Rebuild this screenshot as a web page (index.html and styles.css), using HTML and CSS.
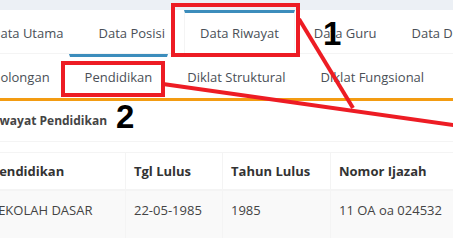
FILE: index.html
```html
<!DOCTYPE html>
<html lang="id">
<head>
<meta charset="utf-8">
<title>Riwayat Pendidikan</title>
<link rel="stylesheet" href="styles.css">
</head>
<body>
<div class="topbar"></div>
<div class="wrap">
  <ul class="nav nav-main">
    <li><a>Data Utama</a></li>
    <li><a>Data Posisi</a></li>
    <li class="active"><a>Data Riwayat</a></li>
    <li><a>Data Guru</a></li>
    <li><a>Data Dokumen</a></li>
  </ul>
  <ul class="nav nav-sub">
    <li><a>Golongan</a></li>
    <li class="active"><a>Pendidikan</a></li>
    <li><a>Diklat Struktural</a></li>
    <li><a>Diklat Fungsional</a></li>
    <li><a>Penghargaan</a></li>
  </ul>
  <div class="panel">
    <div class="panel-heading">Riwayat Pendidikan</div>
    <div class="panel-body">
      <table class="grid">
        <colgroup>
          <col class="c1"><col class="c2"><col class="c3"><col class="c4">
        </colgroup>
        <thead>
          <tr><th>Pendidikan</th><th>Tgl Lulus</th><th>Tahun Lulus</th><th>Nomor Ijazah</th></tr>
        </thead>
        <tbody>
          <tr><td>SEKOLAH DASAR</td><td>22-05-1985</td><td>1985</td><td>11 OA oa 024532</td></tr>
        </tbody>
      </table>
    </div>
  </div>
</div>
<svg class="annot" width="453" height="238" viewBox="0 0 453 238">
  <rect x="173" y="5" width="125" height="50" fill="none" stroke="#ed1c24" stroke-width="4"/>
  <rect x="63" y="63" width="100" height="32" fill="none" stroke="#ed1c24" stroke-width="4"/>
  <line x1="299" y1="19" x2="353" y2="108" stroke="#ed1c24" stroke-width="4"/>
  <line x1="163" y1="84" x2="460" y2="126" stroke="#ed1c24" stroke-width="4"/>
  <text x="323" y="45" class="num">1</text>
  <text x="116" y="128" class="num">2</text>
</svg>
</body>
</html>
```
FILE: styles.css
```css
html, body {
  margin: 0;
  padding: 0;
  background: #ffffff;
  overflow: hidden;
  width: 453px;
  height: 238px;
  position: relative;
  font-family: "Open Sans", "Noto Sans", sans-serif;
  font-size: 13px;
  color: #444;
}
.topbar {
  height: 10px;
  background: #ecf0f5;
}
.wrap {
  margin-left: -25px;
  width: 720px;
}
.nav {
  list-style: none;
  margin: 0;
  padding: 0;
  display: flex;
  flex-wrap: nowrap;
}
.nav li {
  margin-right: 3px;
  border-top: 3px solid transparent;
  border-left: 1px solid transparent;
  border-right: 1px solid transparent;
  white-space: nowrap;
}
.nav li a {
  display: block;
  padding: 0 15px;
  color: #4a4f57;
}
.nav li.active {
  border-top-color: #3c8dbc;
  border-left-color: #f4f4f4;
  border-right-color: #f4f4f4;
}
.nav-main {
  height: 43px;
  border-bottom: 1px solid #f4f4f4;
}
.nav-main li a {
  line-height: 40px;
}
.nav-main li.active {
  height: 41px;
}
.nav-sub {
  height: 44px;
  border-bottom: 3px solid #f39c12;
}
.nav-sub li a {
  line-height: 41px;
}
.nav-sub li.active {
  border-left-color: transparent;
  border-right-color: transparent;
}
.panel-heading {
  padding: 0 13px;
  height: 40px;
  line-height: 40px;
  font-size: 12px;
  font-weight: bold;
  color: #444;
  border-bottom: 1px solid #f4f4f4;
}
.panel-body {
  padding: 10px 10px 10px 7px;
}
.grid {
  border-collapse: collapse;
  table-layout: fixed;
  width: 500px;
  border: 1px solid #f4f4f4;
}
.grid .c1 { width: 143px; }
.grid .c2 { width: 97px; }
.grid .c3 { width: 108px; }
.grid .c4 { width: 152px; }
.grid th, .grid td {
  text-align: left;
  padding: 8px;
  line-height: 20px;
  border-left: 1px solid #f4f4f4;
  border-right: 1px solid #f4f4f4;
  white-space: nowrap;
  overflow: hidden;
}
.grid th {
  font-weight: bold;
  color: #333;
  border-bottom: 2px solid #f4f4f4;
}
.grid tbody tr {
  background: #f9f9f9;
  height: 60px;
}
.grid td {
  vertical-align: top;
  padding-top: 9px;
}
.annot {
  position: absolute;
  left: 0;
  top: 0;
  pointer-events: none;
}
.annot .num {
  font-family: "Liberation Sans", Arial, sans-serif;
  font-weight: bold;
  font-size: 33px;
  fill: #000;
}
```
